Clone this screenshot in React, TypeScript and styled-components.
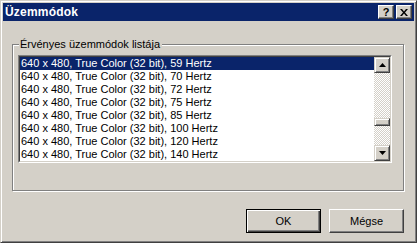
import React from "react";
import styled, { createGlobalStyle } from "styled-components";

const FACE = "#d4d0c8";
const NAVY = "#0a246a";

const Global = createGlobalStyle`
  html, body { margin: 0; padding: 0; background: ${FACE}; }
  body { font-family: "Liberation Sans", Arial, sans-serif; font-size: 11px; color: #000; }
  * { box-sizing: border-box; }
`;

const Window = styled.div`
  width: 417px;
  height: 243px;
  background: ${FACE};
  border: 1px solid;
  border-color: ${FACE} #404040 #404040 ${FACE};
  box-shadow: inset 1px 1px #fff, inset -1px -1px #808080;
  padding: 2px;
  display: flex;
  flex-direction: column;
`;

const TitleBar = styled.div`
  height: 18px;
  background: ${NAVY};
  display: flex;
  align-items: center;
  padding: 0 2px 0 2px;
  gap: 2px;
`;

const Title = styled.div`
  flex: 1;
  color: #fff;
  font-weight: bold;
  font-size: 12px;
  letter-spacing: 0.2px;
`;

const CapButton = styled.div`
  width: 16px;
  height: 14px;
  background: ${FACE};
  border: 1px solid;
  border-color: #fff #404040 #404040 #fff;
  box-shadow: inset -1px -1px #808080;
  display: flex;
  align-items: center;
  justify-content: center;
  font-weight: bold;
  font-size: 11px;
  line-height: 1;
`;

const Body = styled.div`
  flex: 1;
  display: flex;
  flex-direction: column;
  padding: 23px 10px 7px 9px;
`;

const GroupBox = styled.div`
  position: relative;
  height: 147px;
  border: 1px solid #808080;
  box-shadow: 1px 1px 0 #fff, inset 1px 1px 0 #fff;
  padding: 10px 11px 0 5px;
`;

const Legend = styled.span`
  position: absolute;
  top: -7px;
  left: 6px;
  padding: 0 2px 0 1px;
  background: ${FACE};
  line-height: 13px;
`;

const ListBox = styled.div`
  height: 108px;
  border: 1px solid;
  border-color: #808080 #fff #fff #808080;
  display: flex;
`;

const ListInner = styled.div`
  flex: 1;
  display: flex;
  border: 1px solid;
  border-color: #404040 ${FACE} ${FACE} #404040;
  background: #fff;
`;

const Rows = styled.div`
  flex: 1;
  display: flex;
  flex-direction: column;
`;

const Row = styled.div<{ $sel?: boolean }>`
  height: 13px;
  line-height: 13px;
  padding-left: 1px;
  white-space: nowrap;
  background: ${(p) => (p.$sel ? NAVY : "#fff")};
  color: ${(p) => (p.$sel ? "#fff" : "#000")};
`;

const ScrollBar = styled.div`
  width: 16px;
  display: flex;
  flex-direction: column;
`;

const ScrollBtn = styled.div`
  width: 16px;
  height: 16px;
  background: ${FACE};
  border: 1px solid;
  border-color: ${FACE} #404040 #404040 ${FACE};
  box-shadow: inset 1px 1px #fff, inset -1px -1px #808080;
  display: flex;
  align-items: center;
  justify-content: center;
`;

const Track = styled.div`
  flex: 1;
  background: repeating-conic-gradient(#fff 0 25%, ${FACE} 0 50%) 0 0 / 2px 2px;
  padding-top: 45px;
`;

const Thumb = styled.div`
  height: 8px;
  background: ${FACE};
  border: 1px solid;
  border-color: ${FACE} #404040 #404040 ${FACE};
  box-shadow: inset 1px 1px #fff, inset -1px -1px #808080;
`;

const Footer = styled.div`
  margin-top: 18px;
  display: flex;
  justify-content: flex-end;
  gap: 8px;
`;

const Button = styled.div<{ $default?: boolean }>`
  width: 75px;
  height: 24px;
  display: flex;
  align-items: center;
  justify-content: center;
  background: ${FACE};
  border: 1px solid;
  border-color: ${(p) => (p.$default ? "#000" : `#fff #404040 #404040 #fff`)};
  box-shadow: ${(p) =>
    p.$default
      ? "inset 1px 1px #fff, inset -1px -1px #404040, inset -2px -2px #808080"
      : "inset -1px -1px #808080"};
`;

const Arrow = ({ up }: { up?: boolean }) => (
  <svg width="7" height="4" viewBox="0 0 7 4">
    <path d={up ? "M3.5 0 L7 4 L0 4 Z" : "M0 0 L7 0 L3.5 4 Z"} fill="#000" />
  </svg>
);

const modes = [59, 70, 72, 75, 85, 100, 120, 140];

export default function App() {
  return (
    <>
      <Global />
      <Window>
        <TitleBar>
          <Title>Üzemmódok</Title>
          <CapButton>?</CapButton>
          <CapButton>
            <svg width="8" height="7" viewBox="0 0 8 7">
              <path d="M0 0h2l2 2.5L6 0h2L5 3.5 8 7H6L4 4.5 2 7H0l3-3.5z" fill="#000" />
            </svg>
          </CapButton>
        </TitleBar>
        <Body>
          <GroupBox>
            <Legend>Érvényes üzemmódok listája</Legend>
            <ListBox>
              <ListInner>
                <Rows>
                  {modes.map((m, i) => (
                    <Row key={m} $sel={i === 0}>
                      640 x 480, True Color (32 bit), {m} Hertz
                    </Row>
                  ))}
                </Rows>
                <ScrollBar>
                  <ScrollBtn>
                    <Arrow up />
                  </ScrollBtn>
                  <Track>
                    <Thumb />
                  </Track>
                  <ScrollBtn>
                    <Arrow />
                  </ScrollBtn>
                </ScrollBar>
              </ListInner>
            </ListBox>
          </GroupBox>
          <Footer>
            <Button $default>OK</Button>
            <Button>Mégse</Button>
          </Footer>
        </Body>
      </Window>
    </>
  );
}
